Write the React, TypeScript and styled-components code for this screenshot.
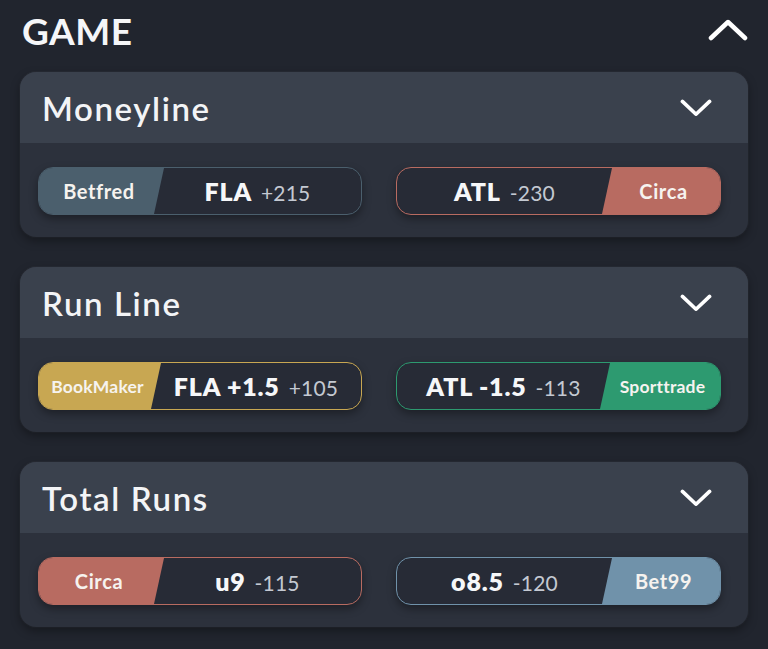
import React from "react";
import styled, { createGlobalStyle } from "styled-components";

const Global = createGlobalStyle`
  html, body { margin: 0; padding: 0; background: #21252e; }
  body { font-family: Lato, "Noto Sans", sans-serif; color: #f3f4f6; }
`;

const Page = styled.div`
  width: 768px;
  height: 649px;
  box-sizing: border-box;
  padding: 0 20px;
  display: flex;
  flex-direction: column;
  overflow: hidden;
`;

const TitleRow = styled.div`
  height: 60px;
  display: flex;
  align-items: center;
  justify-content: space-between;
  padding-left: 2px;
  margin-bottom: 12px;
`;

const Title = styled.h1`
  margin: 0;
  font-size: 37px;
  font-weight: 700;
  letter-spacing: 0.5px;
  color: #f5f6f8;
`;

const Cards = styled.div`
  display: flex;
  flex-direction: column;
  gap: 30px;
`;

const Card = styled.section`
  border-radius: 16px;
  overflow: hidden;
  background: #2c313c;
  box-shadow: 0 4px 10px rgba(0, 0, 0, 0.35), 0 0 0 1px rgba(255, 255, 255, 0.03);
`;

const CardHeader = styled.div`
  height: 71px;
  background: #3a414d;
  display: flex;
  align-items: center;
  justify-content: space-between;
  padding: 0 36px 0 22px;
`;

const CardTitle = styled.h2`
  margin: 0;
  font-size: 33px;
  font-weight: 600;
  letter-spacing: 1.6px;
  color: #f3f4f6;
`;

const CardBody = styled.div`
  height: 94px;
  box-sizing: border-box;
  padding: 24px 27px 0 18px;
  display: grid;
  grid-template-columns: 324px 325px;
  column-gap: 34px;
  align-items: start;
`;

const Pill = styled.div<{ $color: string; $side: "left" | "right" }>`
  height: 48px;
  box-sizing: border-box;
  border: 1.5px solid ${(p) => p.$color};
  border-radius: 15px;
  overflow: hidden;
  background: #272b36;
  display: flex;
  flex-direction: ${(p) => (p.$side === "left" ? "row" : "row-reverse")};
  box-shadow: 0 4px 8px rgba(0, 0, 0, 0.35);
`;

const Book = styled.div<{ $color: string; $side: "left" | "right"; $w: number; $small?: boolean }>`
  flex: 0 0 ${(p) => p.$w}px;
  background: ${(p) => p.$color};
  display: flex;
  align-items: center;
  justify-content: center;
  font-size: ${(p) => (p.$small ? 17.5 : 20)}px;
  font-weight: 700;
  letter-spacing: ${(p) => (p.$small ? 0.2 : 0.6)}px;
  color: #f6f3ef;
  clip-path: ${(p) =>
    p.$side === "left"
      ? "polygon(0 0, 100% 0, calc(100% - 10px) 100%, 0 100%)"
      : "polygon(10px 0, 100% 0, 100% 100%, 0 100%)"};
  margin-${(p) => (p.$side === "left" ? "right" : "left")}: -10px;
  padding-${(p) => (p.$side === "left" ? "right" : "left")}: 5px;
  box-sizing: border-box;
  white-space: nowrap;
`;

const Line = styled.div`
  flex: 1;
  display: flex;
  align-items: center;
  justify-content: center;
`;

const LineText = styled.div`
  white-space: nowrap;
  line-height: 1;
`;

const Main = styled.span`
  font-size: 25px;
  font-weight: 800;
  letter-spacing: 0.8px;
  color: #f6f7f9;
`;

const Odds = styled.span`
  margin-left: 9px;
  font-size: 21px;
  font-weight: 400;
  letter-spacing: 0.2px;
  color: #c4c9d2;
`;

const Chevron = ({ up, size }: { up?: boolean; size: number }) => (
  <svg width={size} height={size * 0.55} viewBox="0 0 40 22" fill="none">
    <path
      d={up ? "M3 19 L20 3 L37 19" : "M3 3 L20 19 L37 3"}
      stroke="#ffffff"
      strokeWidth={4.5}
      strokeLinecap="round"
      strokeLinejoin="round"
    />
  </svg>
);

type Side = {
  book: string;
  color: string;
  main: string;
  odds: string;
  w: number;
  small?: boolean;
};

type Market = { title: string; left: Side; right: Side };

const markets: Market[] = [
  {
    title: "Moneyline",
    left: { book: "Betfred", color: "#4b5f6d", main: "FLA", odds: "+215", w: 125 },
    right: { book: "Circa", color: "#b86b61", main: "ATL", odds: "-230", w: 118 },
  },
  {
    title: "Run Line",
    left: { book: "BookMaker", color: "#c8a752", main: "FLA +1.5", odds: "+105", w: 122, small: true },
    right: { book: "Sporttrade", color: "#2d9a70", main: "ATL -1.5", odds: "-113", w: 120, small: true },
  },
  {
    title: "Total Runs",
    left: { book: "Circa", color: "#b86b61", main: "u9", odds: "-115", w: 125 },
    right: { book: "Bet99", color: "#7092aa", main: "o8.5", odds: "-120", w: 118 },
  },
];

const BetPill = ({ s, side }: { s: Side; side: "left" | "right" }) => (
  <Pill $color={s.color} $side={side}>
    <Book $color={s.color} $side={side} $w={s.w} $small={s.small}>
      {s.book}
    </Book>
    <Line>
      <LineText>
        <Main>{s.main}</Main>
        <Odds>{s.odds}</Odds>
      </LineText>
    </Line>
  </Pill>
);

export default function App() {
  return (
    <>
      <Global />
      <Page>
        <TitleRow>
          <Title>GAME</Title>
          <Chevron up size={40} />
        </TitleRow>
        <Cards>
          {markets.map((m) => (
            <Card key={m.title}>
              <CardHeader>
                <CardTitle>{m.title}</CardTitle>
                <Chevron size={32} />
              </CardHeader>
              <CardBody>
                <BetPill s={m.left} side="left" />
                <BetPill s={m.right} side="right" />
              </CardBody>
            </Card>
          ))}
        </Cards>
      </Page>
    </>
  );
}
